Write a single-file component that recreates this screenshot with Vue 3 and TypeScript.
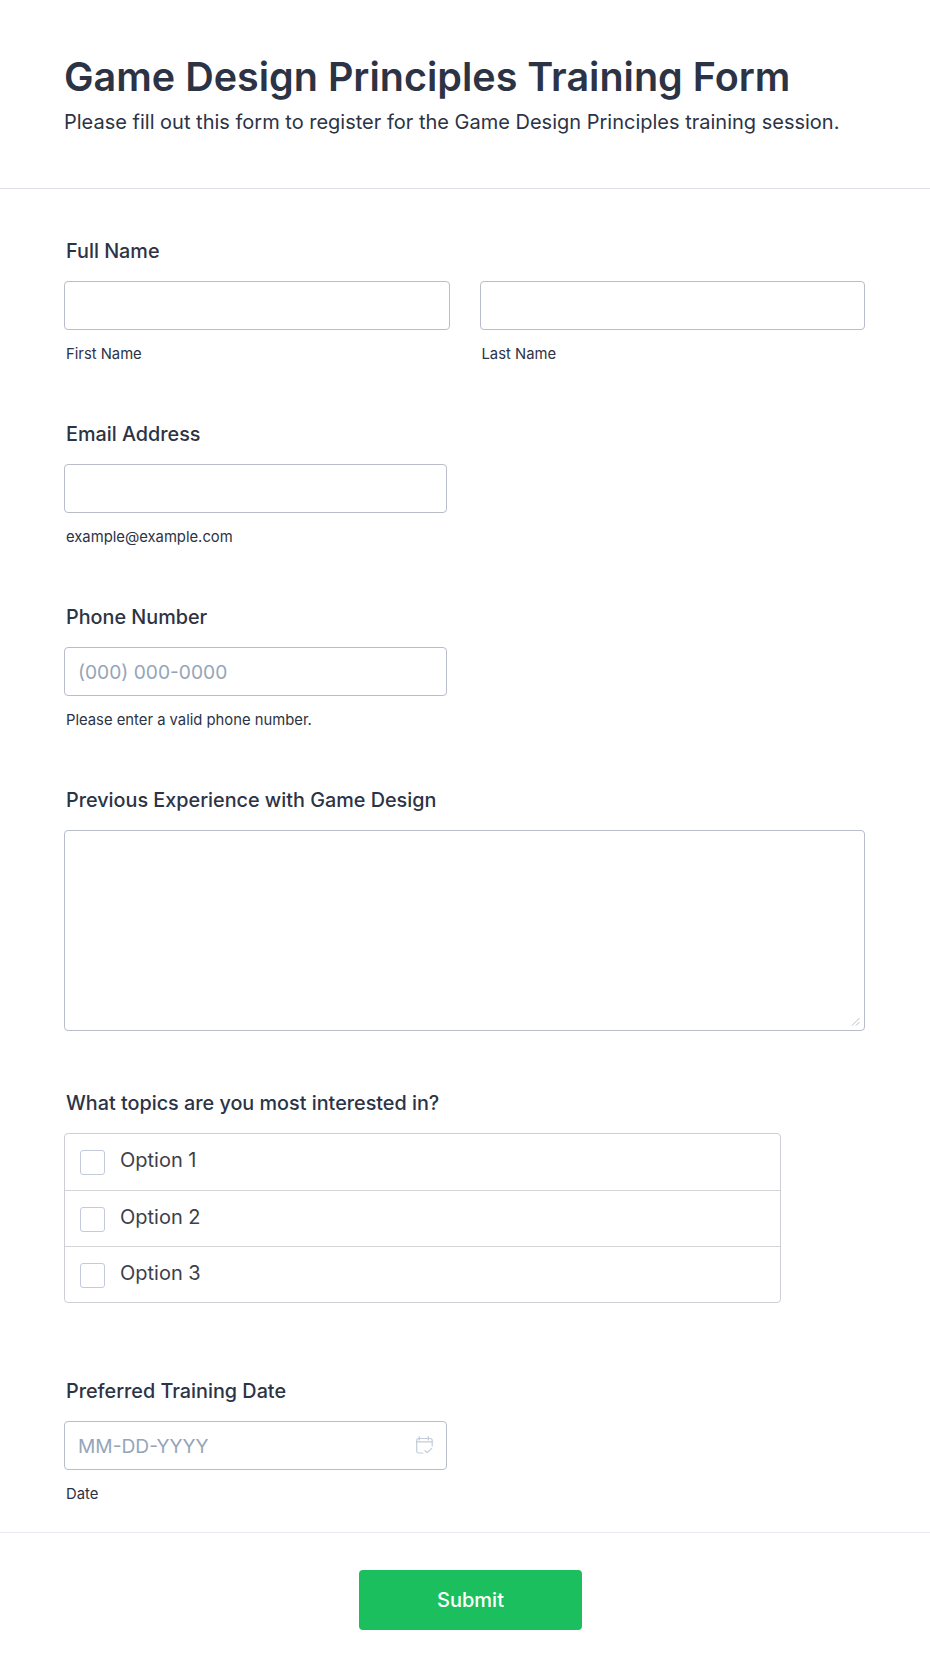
<script setup lang="ts">
const options: string[] = ['Option 1', 'Option 2', 'Option 3']
</script>

<template>
  <main class="form">
    <header class="head">
      <h1 class="title">Game Design Principles Training Form</h1>
      <p class="subtitle">Please fill out this form to register for the Game Design Principles training session.</p>
    </header>

    <section class="body">
      <div class="field">
        <label class="label">Full Name</label>
        <div class="name-row">
          <div class="name-col">
            <input class="input" type="text" />
            <span class="sub">First Name</span>
          </div>
          <div class="name-col">
            <input class="input" type="text" />
            <span class="sub">Last Name</span>
          </div>
        </div>
      </div>

      <div class="field">
        <label class="label">Email Address</label>
        <input class="input short" type="email" />
        <span class="sub">example@example.com</span>
      </div>

      <div class="field">
        <label class="label">Phone Number</label>
        <input class="input short" type="tel" placeholder="(000) 000-0000" />
        <span class="sub">Please enter a valid phone number.</span>
      </div>

      <div class="field">
        <label class="label">Previous Experience with Game Design</label>
        <textarea class="area"></textarea>
      </div>

      <div class="field topics">
        <label class="label">What topics are you most interested in?</label>
        <div class="checks">
          <label v-for="opt in options" :key="opt" class="check-row">
            <input class="box" type="checkbox" />
            <span class="opt">{{ opt }}</span>
          </label>
        </div>
      </div>

      <div class="field date">
        <label class="label">Preferred Training Date</label>
        <div class="date-wrap">
          <input class="input date-input" type="text" placeholder="MM-DD-YYYY" />
          <svg class="cal" viewBox="0 0 17 18" fill="none" stroke="#c3cbd9" stroke-width="1.2" stroke-linecap="round" stroke-linejoin="round">
            <path d="M7 17H2.7a2 2 0 0 1-2-2V4.5a2 2 0 0 1 2-2h11.5a2 2 0 0 1 2 2V10" />
            <path d="M.7 5.8h15.5" />
            <path d="M3.3.7V4M12.3.7V4" />
            <path d="M9 14.7l2.3 2 4.4-4.4" />
          </svg>
        </div>
        <span class="sub">Date</span>
      </div>
    </section>

    <footer class="foot">
      <button class="submit" type="button">Submit</button>
    </footer>
  </main>
</template>

<style>
html, body { background: #fff; }
</style>

<style scoped>
.form {
  width: 930px;
  min-height: 1679px;
  background: #fff;
  font-family: Inter, "Liberation Sans", sans-serif;
  color: #2c3345;
  box-sizing: border-box;
}
.head {
  height: 189px;
  box-sizing: border-box;
  padding: 53px 64px 0;
  border-bottom: 1px solid #dcdfe9;
}
.title {
  margin: 0;
  font-size: 39.5px;
  line-height: 48px;
  font-weight: 600;
}
.subtitle {
  margin: 7px 0 0;
  font-size: 20px;
  line-height: 28px;
  font-weight: 400;
}
.body {
  padding: 51px 64px 0;
  display: flex;
  flex-direction: column;
  gap: 59px;
}
.field {
  display: flex;
  flex-direction: column;
  align-items: flex-start;
}
.label {
  font-size: 19.8px;
  line-height: 22px;
  font-weight: 500;
  margin: 0 0 19px 2px;
}
.name-row {
  display: flex;
  gap: 30px;
  width: 801px;
}
.name-col {
  flex: 1;
  display: flex;
  flex-direction: column;
  align-items: flex-start;
}
.input {
  box-sizing: border-box;
  width: 100%;
  height: 49px;
  padding: 0 13px;
  border: 1px solid #b8bdc9;
  border-radius: 4px;
  background: #fff;
  font-family: inherit;
  font-size: 19.2px;
  color: #2c3345;
  outline: none;
}
.input::placeholder { color: #95a5b9; opacity: 1; }
.short { width: 383px; }
.sub {
  margin: 14px 0 0 2px;
  font-size: 14.8px;
  line-height: 20px;
  color: #2c3345;
}
.area {
  display: block;
  box-sizing: border-box;
  width: 801px;
  height: 201px;
  border: 1px solid #b8bdc9;
  border-radius: 4px;
  background: #fff;
  outline: none;
  resize: vertical;
}
.area::-webkit-resizer {
  background: url("data:image/svg+xml,%3Csvg xmlns='http://www.w3.org/2000/svg' width='15' height='15'%3E%3Cpath d='M3 10.5L10.5 3M7 10.5L10.5 7' stroke='%23b8bdcc' fill='none'/%3E%3C/svg%3E") no-repeat;
}
.checks {
  box-sizing: border-box;
  width: 717px;
  border: 1px solid #cdcfd4;
  border-radius: 4px;
}
.check-row {
  display: flex;
  align-items: flex-start;
  gap: 15px;
  height: 56px;
  padding: 16px 0 0 15px;
  border-bottom: 1px solid #d3d4d8;
  box-sizing: border-box;
}
.check-row:first-child { height: 57px; }
.check-row:last-child { height: 55px; border-bottom: none; }
.box {
  appearance: none;
  box-sizing: border-box;
  width: 25px;
  height: 25px;
  margin: 0;
  border: 1px solid #c3cbd9;
  border-radius: 3px;
  background: #fff;
}
.opt {
  font-size: 20px;
  line-height: 24px;
  color: #3e3f48;
  margin-top: -2px;
}
.topics { margin-top: 2px; }
.date { margin-top: 18px; }
.date-wrap {
  position: relative;
  width: 383px;
}
.date-input { display: block; }
.cal {
  position: absolute;
  right: 14px;
  top: 15px;
  width: 17px;
  height: 18px;
}
.foot {
  margin-top: 28px;
  border-top: 1px solid #e8eaf1;
  padding: 37px 0 49px 11px;
  display: flex;
  justify-content: center;
}
.submit {
  width: 223px;
  height: 60px;
  border: none;
  border-radius: 4px;
  background: #1bbf5e;
  color: #fff;
  font-family: inherit;
  font-size: 20px;
  font-weight: 500;
}
</style>
